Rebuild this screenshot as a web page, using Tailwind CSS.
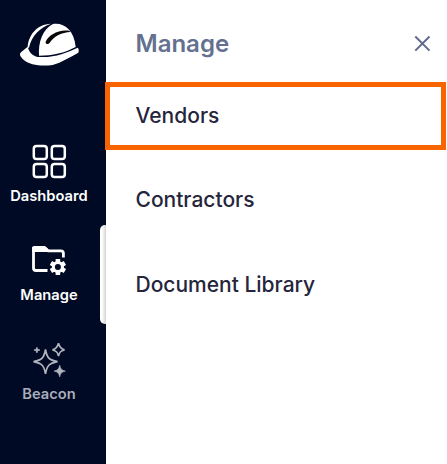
<!DOCTYPE html>
<html lang="en">
<head>
<meta charset="utf-8">
<title>Manage</title>
<script src="https://cdn.jsdelivr.net/npm/@tailwindcss/browser@4"></script>
</head>
<body class="flex h-[464px] w-[447px] overflow-hidden bg-white font-['Inter',sans-serif]">
<nav class="flex w-[106px] shrink-0 flex-col bg-[#000a24] text-white">
  <div class="h-[126px] pl-[10px] pt-[15px]">
    <svg class="h-[60px] w-[80px]" viewBox="0 0 240 180" fill="#fff">
      <path d="M53 98C54 62 80 27 123 26C92 36 64 62 57 98Z"/>
      <path d="M87 122C84 82 98 42 129 27C162 22 192 45 197 96C163 114 128 122 87 122Z"/>
      <path d="M53 95C58 115 72 126 90 126C135 128 170 113 203 98C207 101 207 108 205 113C180 126 155 142 128 150C100 154 60 153 38 132C29 123 28 117 33 112Z"/>
      <path d="M107 80C116 60 145 42 178 47L181 51C156 52 132 63 118 85C114 90 105 86 107 80Z" fill="#080808"/>
    </svg>
  </div>
  <a class="flex h-[99px] flex-col items-center pr-[8px] pt-[16px] text-[14.7px] font-semibold leading-[20px]">
    <svg class="h-[40px] w-[40px]" viewBox="0 0 40 40" fill="none" stroke="#fff" stroke-width="2.5">
      <rect x="4.8" y="4" width="13" height="13.1" rx="2.8"/><rect x="22.8" y="4" width="13" height="13.1" rx="2.8"/>
      <rect x="4.8" y="22" width="13" height="13.1" rx="2.8"/><rect x="22.8" y="22" width="13" height="13.1" rx="2.8"/>
    </svg>
    <span class="mt-[4px]">Dashboard</span>
  </a>
  <div class="flex h-[99px]">
    <a class="flex w-[100px] flex-col items-center pr-[2px] pt-[16px] text-[14.7px] font-semibold leading-[20px]">
      <svg class="h-[40px] w-[40px]" viewBox="0 0 40 40">
        <path d="M18.5 29.5H7Q4.5 29.5 4.5 27V7.5H16.5L19.2 9.8H31.8Q34.4 9.8 34.4 12.2V16.5" fill="none" stroke="#fff" stroke-width="2.8"/>
        <path d="M3.1 11V7Q3.1 5 5.1 5H16L19.5 8.5V11H3.1Z" fill="#fff"/>
        <g transform="translate(28.9 26)" fill="#fff">
          <rect x="-2.3" y="-8.1" width="4.6" height="16.2" rx=".5"/><rect x="-2.3" y="-8.1" width="4.6" height="16.2" rx=".5" transform="rotate(60)"/><rect x="-2.3" y="-8.1" width="4.6" height="16.2" rx=".5" transform="rotate(120)"/>
          <circle r="6.1"/><circle r="3" fill="#000a24"/>
        </g>
      </svg>
      <span class="mt-[4px]">Manage</span>
    </a>
    <div class="w-[6px] rounded-l-[5px] bg-linear-to-r from-white from-30% to-[#d4d4d4]"></div>
  </div>
  <a class="flex flex-col items-center pr-[8px] pt-[16px] text-[14.7px] font-semibold leading-[20px] text-[#a9adb9]">
    <svg class="h-[40px] w-[40px]" viewBox="0 0 40 40" fill="none" stroke="#b2b5bf" stroke-width="1.7">
      <path d="M16.5 9.5C18 18 20 20 28.5 21.6C20 23.3 18 25.5 16.5 33.8C15 25.5 13 23.3 4.5 21.6C13 20 15 18 16.5 9.5Z"/>
      <path d="M29.5 3.3C30.5 7.3 31.7 8.9 35.5 9.8C31.7 10.7 30.5 12 29.5 16C28.5 12 27.3 10.7 23.5 9.8C27.3 8.9 28.5 7.3 29.5 3.3Z"/>
      <path d="M30.7 25.3C31.6 29.1 32.7 30.3 36.3 31.1C32.7 31.9 31.6 33.1 30.7 36.8C29.8 33.1 28.7 31.9 25.1 31.1C28.7 30.3 29.8 29.1 30.7 25.3ZM7.9 7.2L8.7 9.3L11 10L8.7 10.8L7.9 13L7.1 10.8L4.9 10L7.1 9.3Z" fill="#b2b5bf" stroke-width=".7"/>
    </svg>
    <span class="mt-[4px]">Beacon</span>
  </a>
</nav>
<main class="flex w-[341px] shrink-0 flex-col text-[21px] leading-[28px] text-[#25253c]">
  <header class="flex h-[82px] items-start justify-between pl-[29.5px] pr-[16px] pt-[30px] text-[#64708f]">
    <h1 class="text-[24px] font-semibold">Manage</h1>
    <svg class="mt-[5px] h-[17px] w-[17px]" viewBox="0 0 17 17" fill="none" stroke="#606c8c" stroke-width="2"><path d="M1.3 1.5L15.5 15.6M15.5 1.5L1.3 15.6"/></svg>
  </header>
  <a class="relative -ml-px flex h-[68px] w-[341px] items-center border-[5px] border-[#f76400] bg-white pl-[25.5px] font-medium">Vendors</a>
  <a class="flex h-[100px] items-center pl-[29.5px] font-medium">Contractors</a>
  <a class="flex h-[70px] items-center pl-[29.5px] font-medium">Document Library</a>
</main>
</body>
</html>
